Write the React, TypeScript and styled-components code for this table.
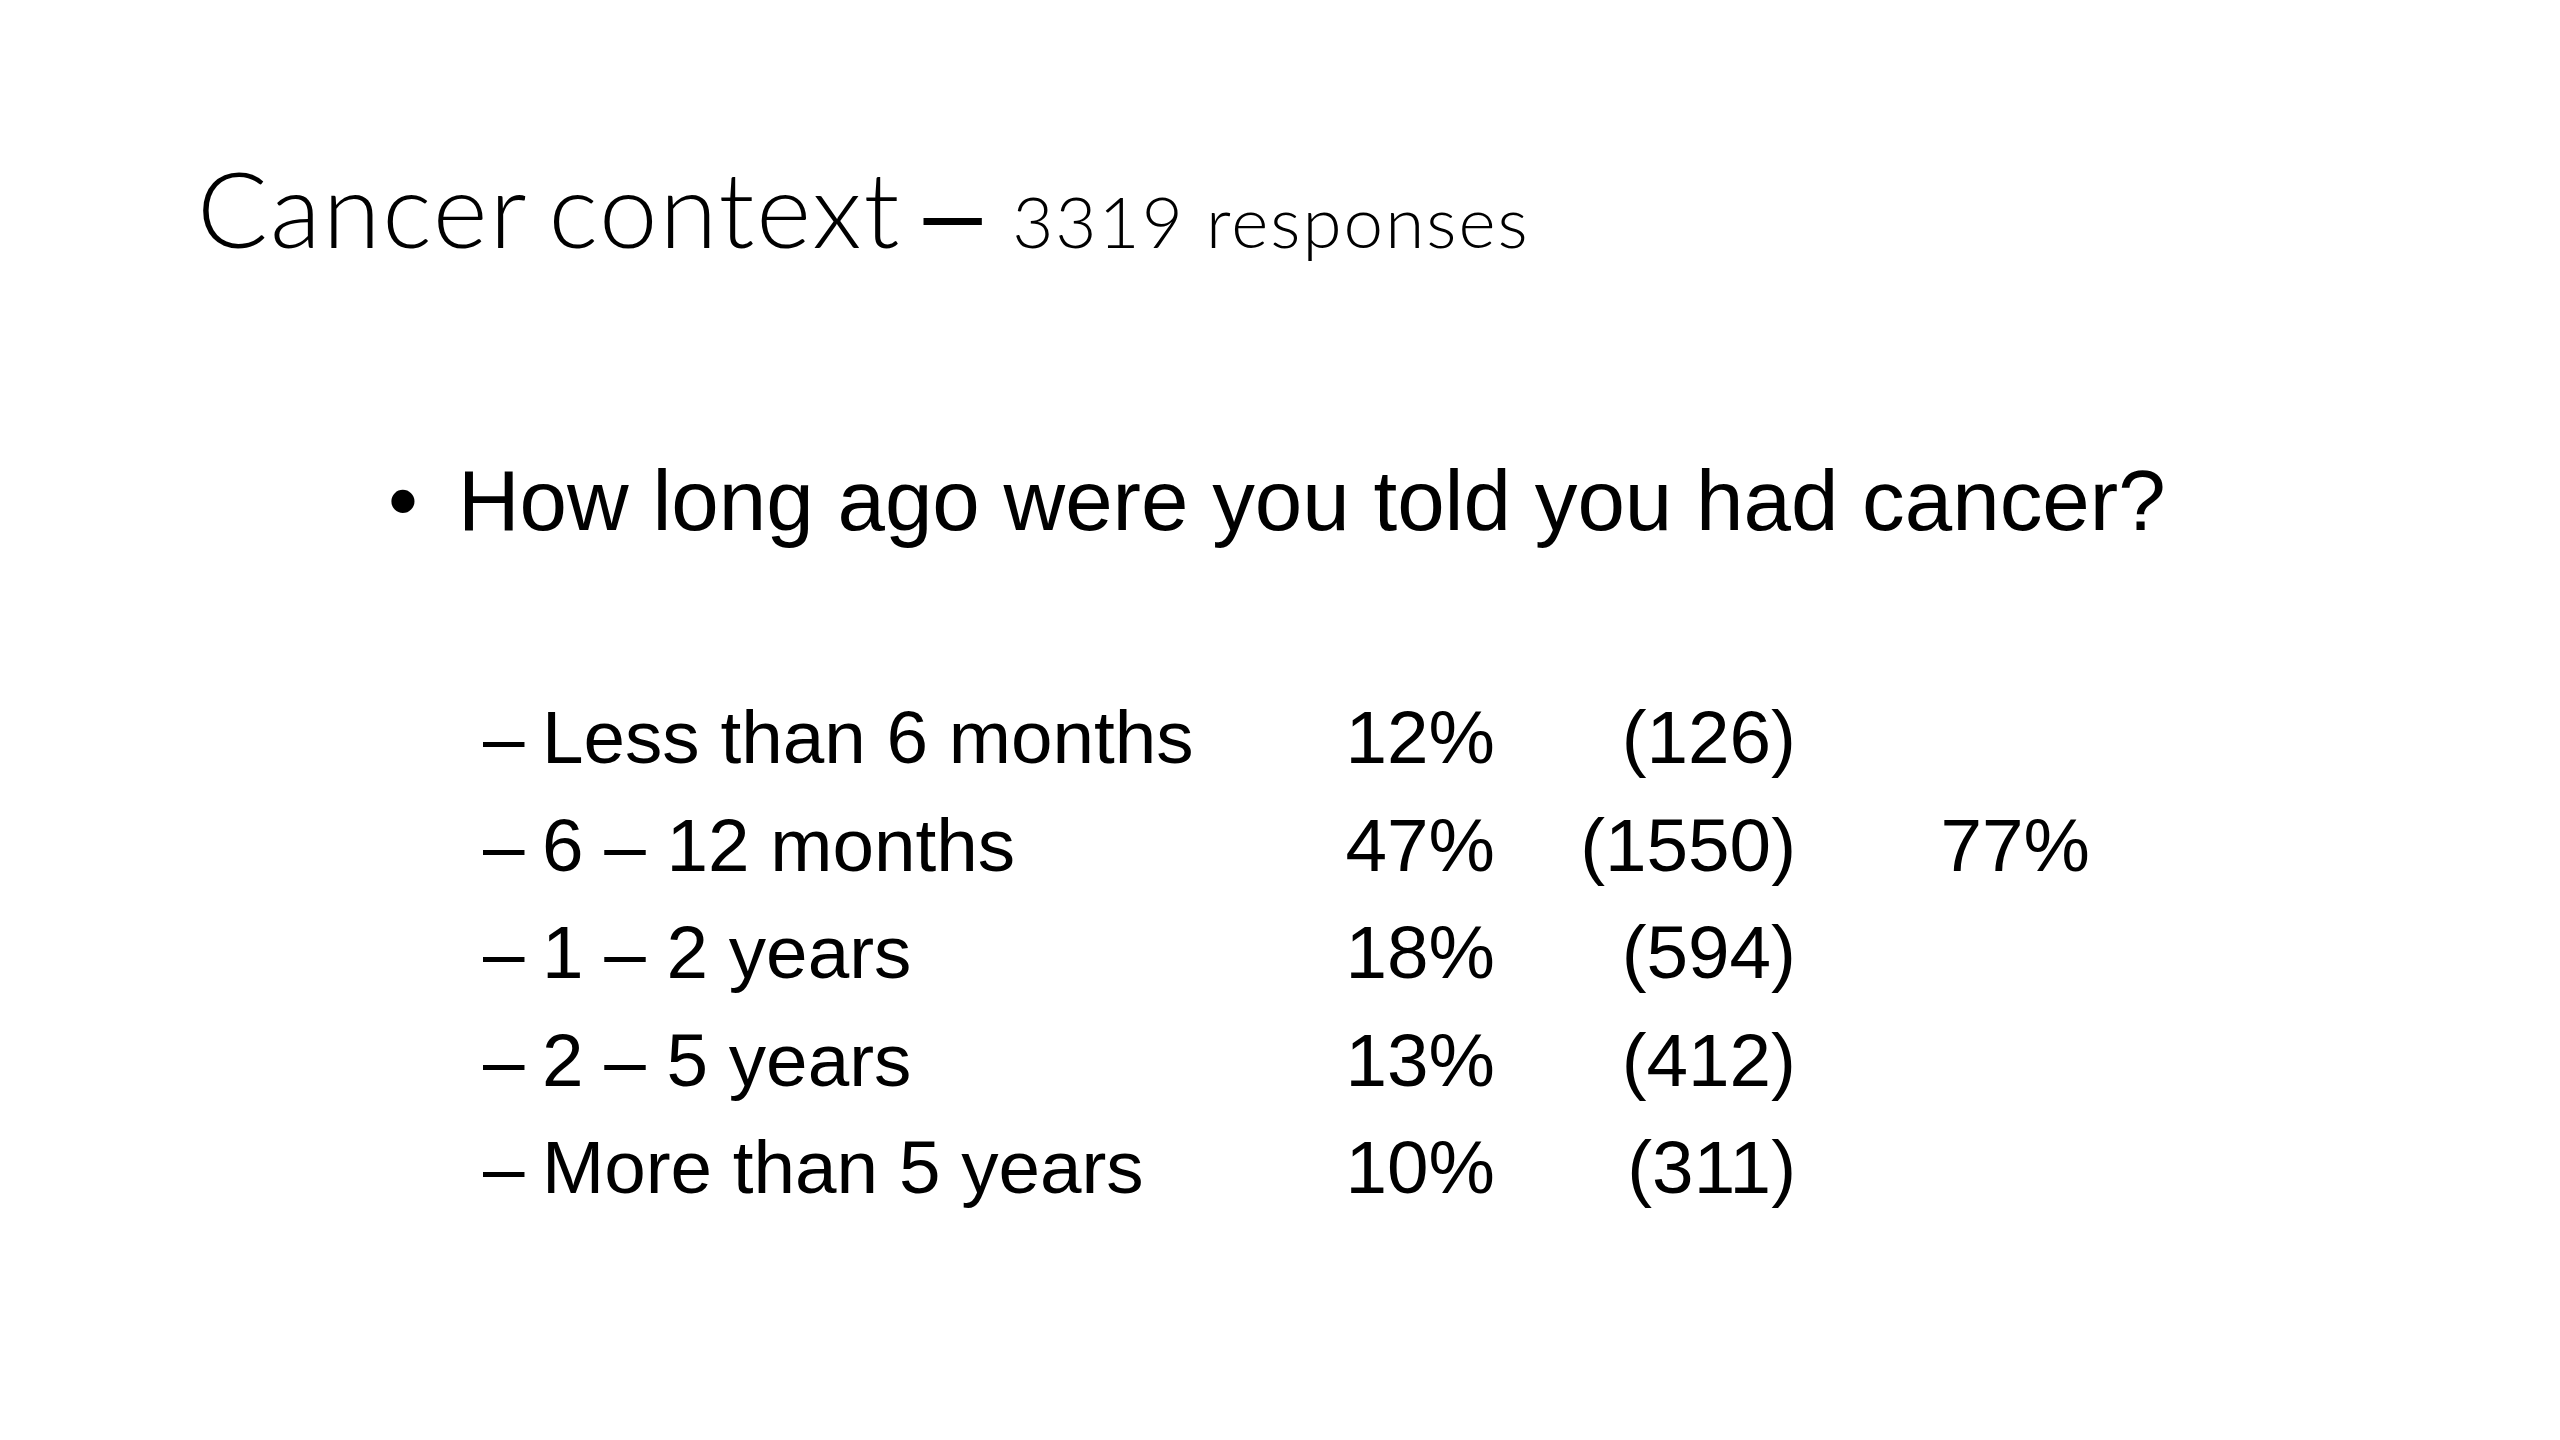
import React from "react";
import styled, { createGlobalStyle } from "styled-components";

const GlobalStyle = createGlobalStyle`
  html, body { margin: 0; padding: 0; background: #ffffff; }
  #root { width: 2560px; height: 1440px; }
`;

const Slide = styled.main`
  box-sizing: border-box;
  width: 2560px;
  height: 1440px;
  background: #ffffff;
  color: #000000;
  display: flex;
  flex-direction: column;
  padding: 144px 0 0 0;
  overflow: hidden;
`;

const Title = styled.h1`
  margin: 0 0 0 197px;
  font-family: Lato, "Open Sans", sans-serif;
  font-weight: 300;
  font-size: 105px;
  line-height: 126px;
  letter-spacing: 1.94px;
  word-spacing: -8.3px;
  white-space: nowrap;
`;

const Dash = styled.span`
  font-family: "Liberation Sans", Arial, sans-serif;
  font-weight: 400;
  line-height: 1;
  letter-spacing: 0;
  margin: 0 8px 0 0;
`;

const Subtitle = styled.span`
  font-size: 71px;
  line-height: 1;
  letter-spacing: 2px;
  word-spacing: normal;
`;

const Question = styled.div`
  margin: 180px 0 0 388px;
  display: flex;
  font-family: "Liberation Sans", Arial, sans-serif;
  font-size: 85.33px;
  line-height: 102.4px;
  white-space: nowrap;
`;

const Bullet = styled.span`
  width: 70px;
  flex: none;
`;

const Table = styled.div`
  margin: 132px 0 0 483px;
  display: grid;
  grid-template-columns: 59px 800px 153px 301px 294px;
  grid-auto-rows: 107.5px;
  font-family: "Liberation Sans", Arial, sans-serif;
  font-size: 74.67px;
  line-height: 107.5px;
  white-space: nowrap;
`;

const Cell = styled.span<{ $align?: "left" | "right" }>`
  text-align: ${(p) => p.$align ?? "left"};
`;

const rows = [
  { label: "Less than 6 months", pct: "12%", count: "(126)", extra: "" },
  { label: "6 – 12 months", pct: "47%", count: "(1550)", extra: "77%" },
  { label: "1 – 2 years", pct: "18%", count: "(594)", extra: "" },
  { label: "2 – 5 years", pct: "13%", count: "(412)", extra: "" },
  { label: "More than 5 years", pct: "10%", count: "(311)", extra: "" },
];

export default function App() {
  return (
    <>
      <GlobalStyle />
      <Slide>
        <Title>
          Cancer context <Dash>–</Dash> <Subtitle>3319 responses</Subtitle>
        </Title>
        <Question>
          <Bullet>•</Bullet>
          <span>How long ago were you told you had cancer?</span>
        </Question>
        <Table>
          {rows.map((r) => (
            <React.Fragment key={r.label}>
              <Cell>–</Cell>
              <Cell>{r.label}</Cell>
              <Cell $align="right">{r.pct}</Cell>
              <Cell $align="right">{r.count}</Cell>
              <Cell $align="right">{r.extra}</Cell>
            </React.Fragment>
          ))}
        </Table>
      </Slide>
    </>
  );
}
